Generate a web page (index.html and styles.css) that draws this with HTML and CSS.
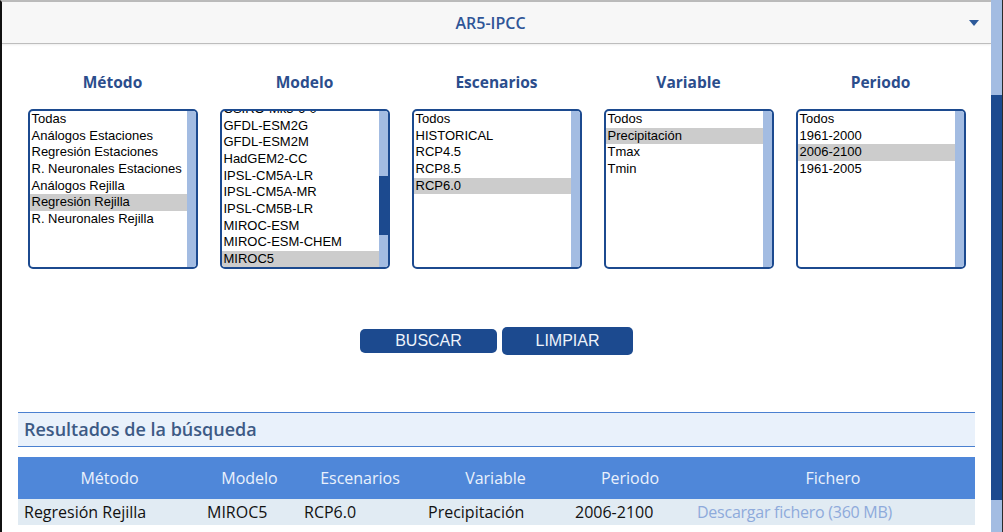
FILE: index.html
```html
<!DOCTYPE html>
<html lang="es">
<head>
<meta charset="utf-8">
<title>AR5-IPCC</title>
<link rel="stylesheet" href="styles.css">
</head>
<body>
<div class="app">
  <div class="frame">
    <div class="acc-header">
      <span class="acc-title">AR5-IPCC</span>
      <span class="acc-caret"></span>
    </div>

    <div class="filters">
      <div class="filter">
        <h3 class="filter-title">Método</h3>
        <div class="listbox">
          <ul class="options">
            <li>Todas</li>
            <li>Análogos Estaciones</li>
            <li>Regresión Estaciones</li>
            <li>R. Neuronales Estaciones</li>
            <li>Análogos Rejilla</li>
            <li class="sel">Regresión Rejilla</li>
            <li>R. Neuronales Rejilla</li>
          </ul>
          <div class="lb-scroll"></div>
        </div>
      </div>
      <div class="filter">
        <h3 class="filter-title">Modelo</h3>
        <div class="listbox">
          <ul class="options scrolled">
            <li>CSIRO-Mk3-6-0</li>
            <li>GFDL-ESM2G</li>
            <li>GFDL-ESM2M</li>
            <li>HadGEM2-CC</li>
            <li>IPSL-CM5A-LR</li>
            <li>IPSL-CM5A-MR</li>
            <li>IPSL-CM5B-LR</li>
            <li>MIROC-ESM</li>
            <li>MIROC-ESM-CHEM</li>
            <li class="sel">MIROC5</li>
          </ul>
          <div class="lb-scroll"><div class="lb-thumb"></div></div>
        </div>
      </div>
      <div class="filter">
        <h3 class="filter-title">Escenarios</h3>
        <div class="listbox">
          <ul class="options">
            <li>Todos</li>
            <li>HISTORICAL</li>
            <li>RCP4.5</li>
            <li>RCP8.5</li>
            <li class="sel">RCP6.0</li>
          </ul>
          <div class="lb-scroll"></div>
        </div>
      </div>
      <div class="filter">
        <h3 class="filter-title">Variable</h3>
        <div class="listbox">
          <ul class="options">
            <li>Todos</li>
            <li class="sel">Precipitación</li>
            <li>Tmax</li>
            <li>Tmin</li>
          </ul>
          <div class="lb-scroll"></div>
        </div>
      </div>
      <div class="filter">
        <h3 class="filter-title">Periodo</h3>
        <div class="listbox">
          <ul class="options">
            <li>Todos</li>
            <li>1961-2000</li>
            <li class="sel">2006-2100</li>
            <li>1961-2005</li>
          </ul>
          <div class="lb-scroll"></div>
        </div>
      </div>
    </div>

    <div class="actions">
      <button class="btn btn-search">BUSCAR</button>
      <button class="btn btn-clear">LIMPIAR</button>
    </div>

    <div class="results">
      <h2 class="results-title">Resultados de la búsqueda</h2>
      <table class="results-table">
        <colgroup>
          <col class="c1"><col class="c2"><col class="c3"><col class="c4"><col class="c5"><col class="c6">
        </colgroup>
        <thead>
          <tr>
            <th>Método</th>
            <th>Modelo</th>
            <th>Escenarios</th>
            <th>Variable</th>
            <th>Periodo</th>
            <th>Fichero</th>
          </tr>
        </thead>
        <tbody>
          <tr>
            <td>Regresión Rejilla</td>
            <td>MIROC5</td>
            <td>RCP6.0</td>
            <td>Precipitación</td>
            <td>2006-2100</td>
            <td><a class="dl" href="#">Descargar fichero (360 MB)</a></td>
          </tr>
        </tbody>
      </table>
    </div>
  </div>
  <div class="page-scroll">
    <div class="ps-track-top"></div>
    <div class="ps-thumb"></div>
    <div class="ps-track-bottom"></div>
  </div>
</div>
</body>
</html>
```

FILE: styles.css
```css
* { box-sizing: border-box; }

html, body {
  margin: 0;
  padding: 0;
  background: #ffffff;
}

body {
  font-family: "Open Sans", "Liberation Sans", sans-serif;
  color: #111;
}

.app {
  display: flex;
  height: 532px;
  overflow: hidden;
}

.frame {
  flex: 1;
  border-left: 2px solid #111;
  border-top: 2px solid #bbbbbb;
  display: flex;
  flex-direction: column;
  min-width: 0;
}

/* accordion header */
.acc-header {
  height: 42px;
  background: #f7f7f7;
  border-bottom: 1px solid #bdbdbd;
  box-shadow: 0 1px 2px rgba(0, 0, 0, 0.07);
  display: flex;
  align-items: center;
  padding-right: 12px;
}

.acc-title {
  flex: 1;
  text-align: center;
  padding-left: 10px;
  font-size: 16px;
  font-weight: 600;
  color: #2f5597;
}

.acc-caret {
  width: 0;
  height: 0;
  border-left: 5px solid transparent;
  border-right: 5px solid transparent;
  border-top: 6px solid #2d5a9a;
}

/* filters */
.filters {
  display: grid;
  grid-template-columns: repeat(5, 192px);
  justify-content: center;
  margin-top: 27px;
}

.filter {
  display: flex;
  flex-direction: column;
  align-items: center;
}

.filter-title {
  margin: 0 0 16px;
  font-size: 15.5px;
  line-height: 22px;
  font-weight: 700;
  color: #2b4d8c;
}

.listbox {
  width: 170px;
  height: 160px;
  border: 2px solid #1c4a8f;
  border-radius: 5px;
  display: flex;
  overflow: hidden;
  background: #fff;
}

.options {
  flex: 1;
  margin: 0;
  padding: 0;
  list-style: none;
  overflow: hidden;
  font-family: "Liberation Sans", Arial, sans-serif;
  font-size: 13px;
  line-height: 16.67px;
  color: #000;
}

.options li {
  padding: 0 2px;
  white-space: nowrap;
}

.options li.sel {
  background: #cccccc;
}

.options.scrolled li:first-child {
  margin-top: -10px;
}

.lb-scroll {
  width: 9px;
  background: #a3bce2;
  display: flex;
  flex-direction: column;
}

.lb-thumb {
  margin-top: 65px;
  height: 59px;
  background: #1c4a8f;
}

/* buttons */
.actions {
  display: flex;
  justify-content: center;
  align-items: center;
  gap: 5px;
  margin-top: 58px;
}

.btn {
  font-family: "Liberation Sans", Arial, sans-serif;
  font-size: 16px;
  color: #eef3fb;
  background: #1c4a8f;
  border: none;
  border-radius: 5px;
  padding: 0;
  cursor: pointer;
}

.btn-search {
  width: 137px;
  height: 24px;
}

.btn-clear {
  width: 131px;
  height: 28px;
}

/* results */
.results {
  margin: 57px 16px 0;
}

.results-title {
  margin: 0;
  height: 35px;
  border-top: 1px solid #4a80d0;
  border-bottom: 1px solid #4a80d0;
  background: #e9f1fb;
  padding-left: 6px;
  font-size: 18px;
  line-height: 33px;
  font-weight: 600;
  color: #3d5a85;
}

.results-table {
  margin-top: 10px;
  width: 957px;
  border-collapse: collapse;
  table-layout: fixed;
  font-size: 16px;
}

.results-table .c1 { width: 183px; }
.results-table .c2 { width: 97px; }
.results-table .c3 { width: 124px; }
.results-table .c4 { width: 147px; }
.results-table .c5 { width: 122px; }
.results-table .c6 { width: 284px; }

.results-table th {
  height: 42px;
  background: #4f87d9;
  color: #eaf1fc;
  font-weight: 400;
  text-align: center;
  padding: 0;
}

.results-table td {
  height: 26px;
  background: #e1ebf3;
  padding: 0 6px;
  white-space: nowrap;
  color: #111;
}

.dl {
  color: #8eaadb;
  text-decoration: none;
  letter-spacing: -0.25px;
}

/* page scrollbar */
.page-scroll {
  width: 12px;
  border-right: 1px solid #2b2b2b;
  display: flex;
  flex-direction: column;
}

.ps-track-top {
  height: 95px;
  background: #a3bce2;
}

.ps-thumb {
  height: 405px;
  background: #1c4a8f;
}

.ps-track-bottom {
  flex: 1;
  background: #a3bce2;
}
```
